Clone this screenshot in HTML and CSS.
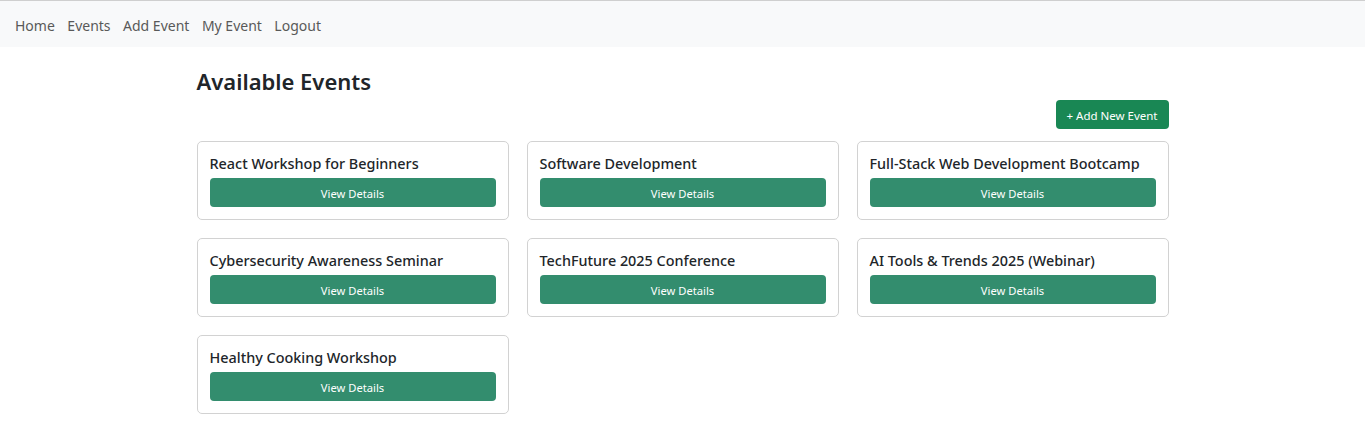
FILE: index.html
```html
<!DOCTYPE html>
<html lang="en">
<head>
<meta charset="utf-8">
<title>Available Events</title>
<link rel="stylesheet" href="styles.css">
</head>
<body>
<nav class="navbar">
  <a class="nav-link" href="#">Home</a>
  <a class="nav-link" href="#">Events</a>
  <a class="nav-link" href="#">Add Event</a>
  <a class="nav-link" href="#">My Event</a>
  <a class="nav-link" href="#">Logout</a>
</nav>
<main class="container">
  <h2 class="page-title">Available Events</h2>
  <div class="toolbar">
    <button class="btn-add">+ Add New Event</button>
  </div>
  <div class="grid">
    <div class="card"><h5 class="card-title">React Workshop for Beginners</h5><button class="btn-view">View Details</button></div>
    <div class="card"><h5 class="card-title">Software Development</h5><button class="btn-view">View Details</button></div>
    <div class="card"><h5 class="card-title">Full-Stack Web Development Bootcamp</h5><button class="btn-view">View Details</button></div>
    <div class="card"><h5 class="card-title">Cybersecurity Awareness Seminar</h5><button class="btn-view">View Details</button></div>
    <div class="card"><h5 class="card-title">TechFuture 2025 Conference</h5><button class="btn-view">View Details</button></div>
    <div class="card"><h5 class="card-title">AI Tools &amp; Trends 2025 (Webinar)</h5><button class="btn-view">View Details</button></div>
    <div class="card"><h5 class="card-title">Healthy Cooking Workshop</h5><button class="btn-view">View Details</button></div>
  </div>
</main>
</body>
</html>
```
FILE: styles.css
```css
* { box-sizing: border-box; }
html, body { margin: 0; padding: 0; }
body {
  font-family: "Noto Sans", "Open Sans", sans-serif;
  color: #212529;
  background: #fff;
  border-top: 1px solid #cfcfcf;
}
.navbar {
  background: #f8f9fa;
  height: 46px;
  display: flex;
  align-items: center;
  padding: 3px 15px 0;
  gap: 12.5px;
}
.nav-link {
  color: #595959;
  text-decoration: none;
  font-size: 14px;
  line-height: 20px;
}
.container {
  width: 972px;
  margin: 0 auto;
}
.page-title {
  margin: 0;
  padding-top: 20px;
  font-size: 22px;
  font-weight: 600;
  line-height: 28px;
  color: #212529;
}
.toolbar {
  display: flex;
  justify-content: flex-end;
  margin-top: 5px;
  margin-bottom: 12px;
}
.btn-add {
  background: #198754;
  color: #fff;
  border: none;
  border-radius: 4px;
  width: 113px;
  height: 29px;
  padding: 1px 0 0;
  font-family: inherit;
  font-size: 11.5px;
}
.grid {
  display: grid;
  grid-template-columns: repeat(3, 312px);
  gap: 18px;
}
.card {
  border: 1px solid #d2d2d2;
  border-radius: 5px;
  padding: 12px;
  height: 79px;
}
.card-title {
  margin: 0 0 5px;
  font-size: 14.4px;
  font-weight: 500;
  line-height: 19px;
  color: #212529;
}
.btn-view {
  display: block;
  width: 100%;
  height: 29px;
  padding: 1px 0 0;
  background: #338d6e;
  color: #fff;
  border: none;
  border-radius: 4px;
  font-family: inherit;
  font-size: 11.2px;
}
```
